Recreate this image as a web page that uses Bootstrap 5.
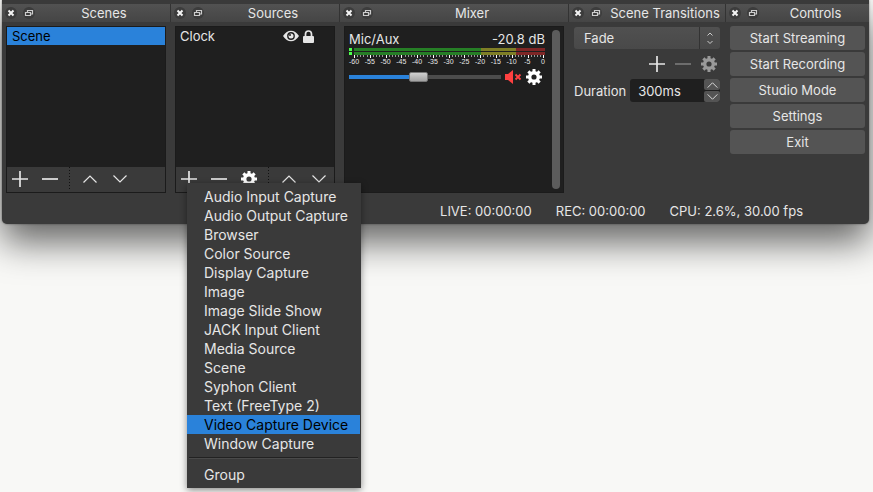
<!DOCTYPE html>
<html lang="en">
<head>
<meta charset="utf-8">
<meta name="viewport" content="width=device-width, initial-scale=1">
<title>Studio</title>
<link href="https://cdn.jsdelivr.net/npm/bootstrap@5.3.0/dist/css/bootstrap.min.css" rel="stylesheet">
<style>
  :root { --win: #3a3a3a; --well: #1f1f1f; --accent: #2a82da; --ink: #e6e6e6; }
  body { min-height: 100vh; background: #f8f8f6; color: var(--ink); font: 13px/18px Inter, "Liberation Sans", sans-serif; overflow: hidden; }
  button, input, select { font: inherit; color: inherit; }
  button { border: 0; background: none; padding: 0; }
  svg { display: block; flex: none; }
  .studio { margin: 0 4px 0 2px; padding-top: 4px; background: var(--win); border-radius: 0 0 5px 5px; box-shadow: 0 0 2px rgba(0,0,0,.5), 0 18px 36px rgba(0,0,0,.6); }
  .docks { display: grid; grid-template-columns: 169fr 169fr 229fr 157fr 143fr; }
  .dock { min-width: 0; display: flex; flex-direction: column; }
  .dock-title { display: flex; align-items: center; height: 18px; background: linear-gradient(#525252, #454545); border-right: 1px solid #333; }
  .dock:last-child .dock-title { border-right: 0; }
  .dock-title h2 { flex: 1; margin: 0; font: inherit; text-align: center; white-space: nowrap; }
  .dock-btn { width: 18px; height: 18px; display: grid; place-items: center; }
  .dock-body { padding: 4px 5px 0 4px; height: 171px; display: flex; flex-direction: column; }
  .dock-body.inset { padding: 4px 6px 0 5px; }
  .dock-body.commands { padding-right: 4px; gap: 2px; }
  .well { background: var(--well); border: 1px solid #1b1b1b; flex: 1; display: flex; flex-direction: column; }
  .entry { display: flex; align-items: center; width: 100%; height: 18px; padding: 0 5px; text-align: left; }
  .entry.chosen { background: var(--accent); color: #000; }
  .tools { display: flex; gap: 4px; height: 25px; padding-bottom: 1px; background: var(--win); position: relative; margin-top: auto; }
  .tool { width: 26px; display: grid; place-items: center; }
  .tools .dots { width: 6px; background: repeating-linear-gradient(#111 0 1px, transparent 1px 3px) 2px 0 / 1px 100% no-repeat; }
  .source-menu { position: absolute; top: 16px; left: 11px; width: 174px; padding: 4px 1px 4px 0; background: var(--win); font-size: 14px; box-shadow: 0 2px 7px rgba(0,0,0,.45); z-index: 5; }
  .source-menu button { display: block; width: 100%; height: 19px; line-height: 19px; padding-left: 17px; text-align: left; white-space: nowrap; }
  .source-menu .chosen { background: var(--accent); color: #000; }
  .source-menu hr { margin: 4px 2px 6px; border: 0; border-top: 1px solid #222; border-bottom: 1px solid #4a4a4a; opacity: 1; }
  .channel { flex: 1; min-width: 0; padding: 3px 7px 0 4px; }
  .vu { display: grid; grid-template-columns: 3px 1fr; column-gap: 2px; row-gap: 1px; }
  .vu i { height: 3px; background: #4cff4c; }
  .vu b { height: 3px; background: linear-gradient(90deg, #267f26 66.5%, #7f7f26 66.5% 85%, #7f2626 85%); }
  .ticks { display: flex; justify-content: space-between; margin-left: 5px; height: 3px; }
  .ticks i { width: 1px; height: 2px; background: #999; }
  .ticks i:nth-child(5n+1) { height: 3px; background: #fff; }
  .scale { display: flex; justify-content: space-between; margin: 0 2px 0 5px; font: 7px/8px "Liberation Sans", sans-serif; }
  .scale span { width: 0; display: flex; justify-content: center; }
  .fader-row { display: flex; align-items: center; padding: 3px 3px 0 0; }
  .fader { -webkit-appearance: none; appearance: none; flex: 1; min-width: 0; height: 10px; margin: 0; background: linear-gradient(90deg, var(--accent) 45%, #4c4c4c 45%) center / 100% 4px no-repeat; border-radius: 2px; }
  .fader::-webkit-slider-thumb { -webkit-appearance: none; width: 19px; height: 10px; border-radius: 2px; border: 1px solid #777; background: linear-gradient(#d0d0d0, #a2a2a2); }
  .scroller { width: 8px; margin: 3px 3px 3px 0; border-radius: 4px; background: #5c5c5c; }
  .picker { position: relative; margin-top: 1px; }
  .picker select { -webkit-appearance: none; appearance: none; display: block; width: 100%; height: 22px; padding: 0 30px 0 10px; border: 0; border-radius: 3px; background: linear-gradient(#505050, #494949); }
  .picker svg { position: absolute; right: 0; top: 0; pointer-events: none; }
  .transition-tools { display: flex; justify-content: flex-end; gap: 4px; height: 30px; }
  .transition-tools .tool { width: 22px; }
  .transition-tools .minor { color: #777; }
  .transition-tools .soft { color: #999; }
  .duration { display: flex; align-items: center; gap: 4px; }
  .spin { flex: 1; min-width: 0; height: 23px; background: var(--well); border-radius: 3px; display: flex; overflow: hidden; }
  .spin input { flex: 1; min-width: 0; border: 0; background: none; padding: 0 8px; outline: 0; }
  .spin div { width: 16px; display: grid; grid-template-rows: 11px 11px; gap: 1px; }
  .spin button { background: #545454; border-radius: 2px; display: grid; place-items: center; }
  .command { height: 24px; border-radius: 3px; background: #545454; width: 100%; }
  .status { display: flex; justify-content: flex-end; gap: 24px; padding: 9px 66px 4px 0; }
</style>
<script src="https://cdn.jsdelivr.net/npm/bootstrap@5.3.0/dist/js/bootstrap.bundle.min.js" defer></script>
</head>
<body>
<svg width="0" height="0" class="position-absolute" aria-hidden="true">
  <symbol id="close" viewBox="0 0 12 12"><circle cx="6" cy="6" r="6" fill="#3c3c3c"/><path d="M3.500 3.500l5 5m0-5l-5 5" stroke="#f4f4f4" stroke-width="2"/></symbol>
  <symbol id="float" viewBox="0 0 12 12"><circle cx="6" cy="6" r="6" fill="#3c3c3c"/><path d="M4.500 5V3.500h5v3.500H8M2.500 5.500h5v3h-5z" fill="none" stroke="#ccc" stroke-width="1.200"/></symbol>
  <symbol id="plus" viewBox="0 0 16 16"><path d="M8 0v16M0 8h16" stroke="currentColor" stroke-width="1.700"/></symbol>
  <symbol id="minus" viewBox="0 0 16 16"><path d="M0 8h16" stroke="currentColor" stroke-width="1.700"/></symbol>
  <symbol id="up" viewBox="0 0 14 8"><path d="M.5 7.500L7 1l6.500 6.500" fill="none" stroke="currentColor" stroke-width="1.200"/></symbol>
  <symbol id="down" viewBox="0 0 14 8"><path d="M.5.5L7 7 13.500.5" fill="none" stroke="currentColor" stroke-width="1.200"/></symbol>
  <symbol id="gear" viewBox="0 0 16 16"><circle cx="8" cy="8" r="4.300" fill="none" stroke="currentColor" stroke-width="3.400"/><path d="M8 0v3M8 13v3M0 8h3M13 8h3M2.350 2.350l2 2M11.650 11.650l2 2M2.350 13.650l2-2M11.650 4.350l2-2" stroke="currentColor" stroke-width="3"/></symbol>
</svg>

<main class="studio">
  <div class="docks">
    <section class="dock">
      <header class="dock-title"><button class="dock-btn" aria-label="Close Scenes"><svg width="12" height="12"><use href="#close"/></svg></button><button class="dock-btn" aria-label="Float Scenes"><svg width="12" height="12"><use href="#float"/></svg></button><h2>Scenes</h2></header>
      <div class="dock-body">
        <div class="well">
          <button class="entry chosen">Scene</button>
          <div class="tools">
            <button class="tool" aria-label="Add scene"><svg width="16" height="16"><use href="#plus"/></svg></button>
            <button class="tool" aria-label="Remove scene"><svg width="16" height="16"><use href="#minus"/></svg></button>
            <span class="dots"></span>
            <button class="tool" aria-label="Move scene up"><svg width="14" height="8"><use href="#up"/></svg></button>
            <button class="tool" aria-label="Move scene down"><svg width="14" height="8"><use href="#down"/></svg></button>
          </div>
        </div>
      </div>
    </section>

    <section class="dock">
      <header class="dock-title"><button class="dock-btn" aria-label="Close Sources"><svg width="12" height="12"><use href="#close"/></svg></button><button class="dock-btn" aria-label="Float Sources"><svg width="12" height="12"><use href="#float"/></svg></button><h2>Sources</h2></header>
      <div class="dock-body">
        <div class="well">
          <div class="entry px-1">
            <span class="me-auto">Clock</span>
            <button aria-label="Visible"><svg width="16" height="12" viewBox="0 0 16 12"><path d="M0 6Q3.500.7 8 .7T16 6q-3.500 5.300-8 5.300T0 6z" fill="#e6e6e6"/><circle cx="8" cy="6" r="3.900" fill="#1f1f1f"/><circle cx="8" cy="6" r="2.500" fill="#e6e6e6"/><circle cx="7" cy="5" r="1" fill="#1f1f1f"/></svg></button>
            <button class="ms-1 me-3" aria-label="Locked"><svg width="11" height="13" viewBox="0 0 11 13"><path d="M2.500 6V4a3 3 0 0 1 6 0v2" fill="none" stroke="#e6e6e6" stroke-width="1.700"/><rect y="6" width="11" height="7" rx="1" fill="#e6e6e6"/></svg></button>
          </div>
          <div class="tools">
            <button class="tool" aria-label="Add source" aria-expanded="true"><svg width="16" height="16"><use href="#plus"/></svg></button>
            <button class="tool" aria-label="Remove source"><svg width="16" height="16"><use href="#minus"/></svg></button>
            <button class="tool text-white" aria-label="Source properties"><svg width="16" height="16"><use href="#gear"/></svg></button>
            <span class="dots"></span>
            <button class="tool" aria-label="Move source up"><svg width="14" height="8"><use href="#up"/></svg></button>
            <button class="tool" aria-label="Move source down"><svg width="14" height="8"><use href="#down"/></svg></button>
            <div class="source-menu" role="menu">
              <button role="menuitem">Audio Input Capture</button>
              <button role="menuitem">Audio Output Capture</button>
              <button role="menuitem">Browser</button>
              <button role="menuitem">Color Source</button>
              <button role="menuitem">Display Capture</button>
              <button role="menuitem">Image</button>
              <button role="menuitem">Image Slide Show</button>
              <button role="menuitem">JACK Input Client</button>
              <button role="menuitem">Media Source</button>
              <button role="menuitem">Scene</button>
              <button role="menuitem">Syphon Client</button>
              <button role="menuitem">Text (FreeType 2)</button>
              <button role="menuitem" class="chosen">Video Capture Device</button>
              <button role="menuitem">Window Capture</button>
              <hr>
              <button role="menuitem">Group</button>
            </div>
          </div>
        </div>
      </div>
    </section>

    <section class="dock">
      <header class="dock-title"><button class="dock-btn" aria-label="Close Mixer"><svg width="12" height="12"><use href="#close"/></svg></button><button class="dock-btn" aria-label="Float Mixer"><svg width="12" height="12"><use href="#float"/></svg></button><h2>Mixer</h2></header>
      <div class="dock-body">
        <div class="well flex-row">
          <div class="channel">
            <div class="d-flex justify-content-between"><label for="vol">Mic/Aux</label><span>-20.8 dB</span></div>
            <div class="vu"><i></i><b></b><i></i><b></b></div>
            <div class="ticks" id="ticks"></div>
            <div class="scale"><span>-60</span><span>-55</span><span>-50</span><span>-45</span><span>-40</span><span>-35</span><span>-30</span><span>-25</span><span>-20</span><span>-15</span><span>-10</span><span>-5</span><span>0</span></div>
            <div class="fader-row">
              <input class="fader" id="vol" type="range" value="45">
              <button class="ms-1" aria-label="Muted"><svg width="17" height="14" viewBox="0 0 17 14"><path d="M0 4h3l5-4v14l-5-4H0z" fill="#ff4040"/><path d="M10.500 4.500l5 5m0-5l-5 5" stroke="#ff4040" stroke-width="1.800"/></svg></button>
              <button class="ms-1 text-white" aria-label="Mixer settings"><svg width="16" height="16"><use href="#gear"/></svg></button>
            </div>
          </div>
          <div class="scroller"></div>
        </div>
      </div>
    </section>

    <section class="dock">
      <header class="dock-title"><button class="dock-btn" aria-label="Close Scene Transitions"><svg width="12" height="12"><use href="#close"/></svg></button><button class="dock-btn" aria-label="Float Scene Transitions"><svg width="12" height="12"><use href="#float"/></svg></button><h2>Scene Transitions</h2></header>
      <div class="dock-body inset">
        <div class="picker">
          <select aria-label="Transition"><option>Fade</option><option>Cut</option></select>
          <svg width="21" height="22" viewBox="0 0 21 22"><path d="M.5 0v22" stroke="#333"/><path d="M8.500 8.500L11 6l2.500 2.500M8.500 14l2.500 2.500L13.500 14" fill="none" stroke="#ccc"/></svg>
        </div>
        <div class="transition-tools">
          <button class="tool" aria-label="Add transition"><svg width="16" height="16"><use href="#plus"/></svg></button>
          <button class="tool minor" aria-label="Remove transition" disabled><svg width="16" height="16"><use href="#minus"/></svg></button>
          <button class="tool soft" aria-label="Transition settings"><svg width="16" height="16"><use href="#gear"/></svg></button>
        </div>
        <div class="duration">
          <label for="dur">Duration</label>
          <div class="spin"><input id="dur" value="300ms"><div><button aria-label="Increase"><svg width="11" height="6"><use href="#up"/></svg></button><button aria-label="Decrease"><svg width="11" height="6"><use href="#down"/></svg></button></div></div>
        </div>
      </div>
    </section>

    <section class="dock">
      <header class="dock-title"><button class="dock-btn" aria-label="Close Controls"><svg width="12" height="12"><use href="#close"/></svg></button><button class="dock-btn" aria-label="Float Controls"><svg width="12" height="12"><use href="#float"/></svg></button><h2>Controls</h2></header>
      <div class="dock-body commands">
        <button class="command">Start Streaming</button>
        <button class="command">Start Recording</button>
        <button class="command">Studio Mode</button>
        <button class="command">Settings</button>
        <button class="command">Exit</button>
      </div>
    </section>
  </div>
  <footer class="status"><span>LIVE: 00:00:00</span><span>REC: 00:00:00</span><span>CPU: 2.6%, 30.00 fps</span></footer>
</main>
<script>
  // One tick for every decibel from -60 to 0
  document.getElementById('ticks').innerHTML = '<i></i>'.repeat(61);
</script>
</body>
</html>
